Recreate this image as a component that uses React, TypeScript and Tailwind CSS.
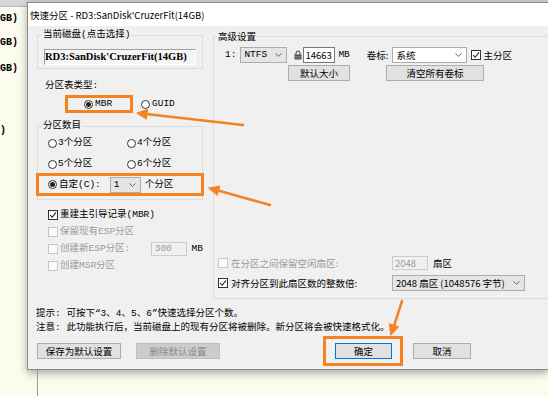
import React from 'react';

const sim = "font-['Liberation_Mono','Noto_Sans_CJK_SC',monospace]";

function Radio({ checked }: { checked?: boolean }) {
  return (
    <span className="w-[9px] h-[9px] shrink-0 rounded-full border border-[#333] bg-white flex items-center justify-center">
      {checked && <span className="w-[5px] h-[5px] rounded-full bg-[#222]" />}
    </span>
  );
}

function Check({ checked, disabled }: { checked?: boolean; disabled?: boolean }) {
  return (
    <span
      className={`w-[10px] h-[10px] shrink-0 border flex items-center justify-center ${
        disabled ? 'border-[#c6c6c6] bg-[#fafafa]' : 'border-[#333] bg-white'
      }`}
    >
      {checked && (
        <svg viewBox="0 0 10 10" className="w-[8px] h-[8px]">
          <path d="M1.2 5 L4 7.8 L8.8 1.8" stroke="#222" strokeWidth="1.3" fill="none" />
        </svg>
      )}
    </span>
  );
}

function Chevron() {
  return (
    <svg width="7" height="4" viewBox="0 0 7 4" className="shrink-0">
      <path d="M0.5 0.5 L3.5 3.3 L6.5 0.5" stroke="#666" fill="none" />
    </svg>
  );
}

function Combo({ value, className }: { value: string; className: string }) {
  return (
    <div className={`h-[16px] flex items-center justify-between border border-[#adadad] pl-[3px] pr-[4px] ${className}`}>
      <span className="whitespace-nowrap">{value}</span>
      <Chevron />
    </div>
  );
}

function Lock() {
  return (
    <svg width="8" height="10" viewBox="0 0 8 10" className="shrink-0">
      <path d="M2 4.5V3a2 2 0 0 1 4 0v1.5" stroke="#333" fill="none" />
      <rect x="0.5" y="4.5" width="7" height="5" fill="#444" />
      <path d="M1 6.3h6M1 8h6" stroke="#bbb" strokeWidth="0.6" />
    </svg>
  );
}

export default function App() {
  return (
    <div className="relative w-[548px] h-[396px] overflow-hidden flex bg-[#fcfcee] text-black text-[9.5px] leading-[12px] font-['Noto_Sans_CJK_SC',sans-serif]">
      {/* background window strip */}
      <div className="w-[27px] shrink-0 flex flex-col overflow-hidden font-['Liberation_Mono',monospace] font-bold text-[10px]">
        <div className="h-[7px] shrink-0 bg-[#d6d6d6] border-b border-[#b8b8b8]" />
        <div className="mt-[6px] whitespace-nowrap">GB)</div>
        <div className="mt-[12px] whitespace-nowrap">GB)</div>
        <div className="mt-[14px] whitespace-nowrap">GB)</div>
        <div className="mt-[50px] whitespace-nowrap">)</div>
      </div>

      <div className="flex-1 min-w-0 flex flex-col">
        <div className="h-[2px] shrink-0 bg-[#cfcfcf]" />
        <div className="h-[368px] shrink-0 flex flex-col border-l border-t border-b border-[#8a8a8a] bg-[#f0f0f0] shadow-[0_3px_8px_rgba(0,0,0,0.35)]">
          {/* title bar */}
          <div className="h-[23px] shrink-0 bg-white flex items-center pl-[2px] whitespace-nowrap">
            快速分区 - RD3:SanDisk'CruzerFit(14GB)
          </div>

          {/* body */}
          <div className={`flex-1 flex flex-col pl-[9px] pt-[3px] ${sim}`}>
            <div className="flex">
              {/* left column */}
              <div className="w-[166px] shrink-0 flex flex-col">
                <fieldset className="border border-[#dcdcdc] px-[6px] pb-[3px]">
                  <legend className="-ml-[2px] px-[1px]">当前磁盘(点击选择)</legend>
                  <div className="mt-[8px] h-[16px] flex items-center bg-[#f6f6f6] border-l border-t border-[#a0a0a0] border-r border-b border-r-[#ffffff] border-b-[#ffffff] font-['Liberation_Serif',serif] font-bold text-[10.5px] whitespace-nowrap overflow-hidden">
                    RD3:SanDisk'CruzerFit(14GB)
                  </div>
                </fieldset>

                <div className="mt-[11px] pl-[8px]">分区表类型:</div>
                <div className="mt-[3px] flex items-center">
                  <div className="ml-[28px] w-[68px] h-[18px] border-[3px] border-[#f58220] flex items-center pl-[16px]">
                    <Radio checked />
                    <span className="ml-[2px]">MBR</span>
                  </div>
                  <div className="ml-[8px] flex items-center">
                    <Radio />
                    <span className="ml-[2px]">GUID</span>
                  </div>
                </div>

                <fieldset className="mt-[7px] border border-[#dcdcdc] pb-[3px]">
                  <legend className="ml-[4px] px-[1px]">分区数目</legend>
                  <div className="mt-[4px] pl-[10px] grid grid-cols-[79px_1fr] gap-y-[7px]">
                    {['3个分区', '4个分区', '5个分区', '6个分区'].map((t) => (
                      <div key={t} className="h-[14px] flex items-center">
                        <Radio />
                        <span className="ml-[1px]">{t}</span>
                      </div>
                    ))}
                  </div>
                  <div className="mt-[2px] -mx-[2px] h-[23px] border-[3px] border-[#f58220] flex items-center pl-[9px]">
                    <Radio checked />
                    <span className="ml-[2px]">自定(C):</span>
                    <Combo value="1" className="ml-[9px] w-[31px] bg-[#e5e5e5]" />
                    <span className="ml-[4px]">个分区</span>
                  </div>
                </fieldset>

                <div className="mt-[6px] pl-[11px] flex flex-col">
                  <div className="h-[17px] flex items-center">
                    <Check checked />
                    <span className="ml-[2px]">重建主引导记录(MBR)</span>
                  </div>
                  <div className="h-[17px] flex items-center text-[#9a9a9a]">
                    <Check disabled />
                    <span className="ml-[2px]">保留现有ESP分区</span>
                  </div>
                  <div className="h-[17px] flex items-center text-[#9a9a9a]">
                    <Check disabled />
                    <span className="ml-[2px] w-[91px]">创建新ESP分区:</span>
                    <div className="w-[36px] h-[14px] border border-[#cccccc] bg-[#f0f0f0] flex items-center pl-[3px]">300</div>
                    <span className="ml-[5px] text-black">MB</span>
                  </div>
                  <div className="h-[17px] flex items-center text-[#9a9a9a]">
                    <Check disabled />
                    <span className="ml-[2px]">创建MSR分区</span>
                  </div>
                </div>
              </div>

              {/* right column */}
              <fieldset className="ml-[10px] mt-[1px] w-[340px] shrink-0 self-start border border-[#dcdcdc] font-['Noto_Sans_CJK_SC',sans-serif]">
                <legend className="ml-[3px] px-[1px]">高级设置</legend>
                <div className="h-[256px] flex flex-col">
                  <div className="mt-[5px] h-[16px] flex items-center pl-[11px]">
                    <span className={sim}>1:</span>
                    <Combo value="NTFS" className={`ml-[4px] w-[47px] bg-[#e5e5e5] ${sim}`} />
                    <span className="ml-[7px]">
                      <Lock />
                    </span>
                    <div className="ml-[1px] w-[32px] h-[16px] border border-[#7a7a7a] bg-white flex items-center pl-[1px]">14663</div>
                    <span className={`ml-[3px] ${sim}`}>MB</span>
                    <span className="ml-[17px]">卷标:</span>
                    <Combo value="系统" className="ml-[4px] w-[75px] bg-white" />
                    <span className="ml-[4px]">
                      <Check checked />
                    </span>
                    <span className="ml-[2px]">主分区</span>
                  </div>
                  <div className="mt-[2px] h-[16px] flex items-center pl-[74px]">
                    <button className="w-[62px] h-[16px] bg-[#e1e1e1] border border-[#adadad]">默认大小</button>
                    <button className="ml-[36px] w-[98px] h-[16px] bg-[#e1e1e1] border border-[#adadad]">清空所有卷标</button>
                  </div>

                  <div className="mt-auto pb-[7px] pl-[4px] flex flex-col gap-[4px]">
                    <div className="h-[16px] flex items-center">
                      <div className="w-[174px] flex items-center text-[#9a9a9a]">
                        <Check disabled />
                        <span className="ml-[3px]">在分区之间保留空闲扇区:</span>
                      </div>
                      <div className="w-[36px] h-[14px] border border-[#cccccc] bg-[#f0f0f0] text-[#9a9a9a] flex items-center pl-[2px]">2048</div>
                      <span className="ml-[5px]">扇区</span>
                    </div>
                    <div className="h-[16px] flex items-center">
                      <div className="w-[174px] flex items-center">
                        <Check checked />
                        <span className="ml-[3px]">对齐分区到此扇区数的整数倍:</span>
                      </div>
                      <Combo value="2048 扇区 (1048576 字节)" className="w-[133px] bg-[#e5e5e5]" />
                    </div>
                  </div>
                </div>
              </fieldset>
            </div>

            {/* hints */}
            <div className="mt-[9px] -ml-[1px] flex flex-col gap-[2px] whitespace-nowrap">
              <div>提示: 可按下“3、4、5、6”快速选择分区个数。</div>
              <div>注意: 此功能执行后，当前磁盘上的现有分区将被删除。新分区将会被快速格式化。</div>
            </div>

            {/* buttons */}
            <div className="mt-[2px] h-[30px] flex items-center font-['Noto_Sans_CJK_SC',sans-serif]">
              <button className="w-[84px] h-[16px] bg-[#e1e1e1] border border-[#adadad]">保存为默认设置</button>
              <button className="ml-[15px] w-[84px] h-[16px] bg-[#cccccc] border border-[#bfbfbf] text-[#8a8a8a]">删除默认设置</button>
              <div className="ml-[103px] w-[80px] h-[30px] border-[3px] border-[#f58220] flex items-center pl-[9px]">
                <button className="w-[57px] h-[16px] bg-[#e1e1e1] border border-[#0078d7]">确定</button>
              </div>
              <button className="ml-[10px] w-[58px] h-[16px] bg-[#e1e1e1] border border-[#adadad]">取消</button>
            </div>
          </div>
        </div>
        {/* window below the dialog */}
        <div className="flex-1 pl-[10px]">
          <div className="w-px h-full bg-[#9a9a9a]" />
        </div>
      </div>

      {/* annotation arrows */}
      <svg className="absolute inset-0 pointer-events-none" width="548" height="396" viewBox="0 0 548 396">
        <g stroke="#f58220" strokeWidth="2.5" fill="#f58220" strokeLinecap="round">
          <line x1="243" y1="125" x2="146" y2="114" />
          <path d="M137 113 L147.6 109.4 L146.4 118.8 Z" strokeWidth="1" />
          <line x1="270" y1="205" x2="218" y2="190.5" />
          <path d="M209 188 L219.9 186.2 L217.3 195.1 Z" strokeWidth="1" />
          <line x1="402" y1="301" x2="394" y2="326" />
          <path d="M391 335 L398.5 326.8 L389.6 323.9 Z" strokeWidth="1" />
        </g>
      </svg>
    </div>
  );
}
